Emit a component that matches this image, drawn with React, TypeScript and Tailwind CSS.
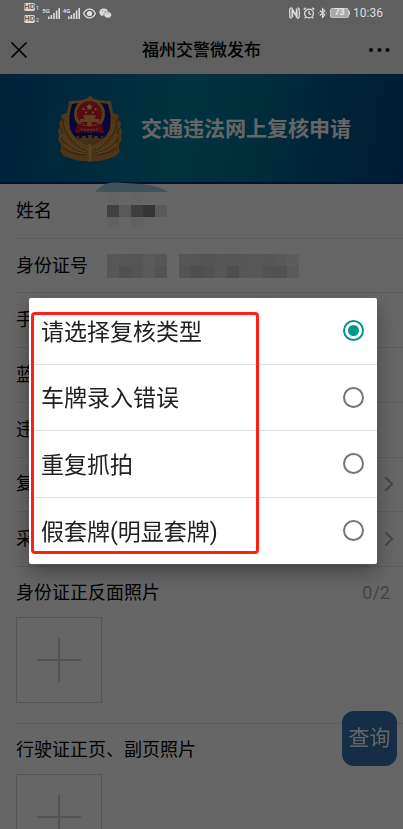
import { useState } from "react";
import { ChevronRight, X } from "lucide-react";

const options = ["请选择复核类型", "车牌录入错误", "重复抓拍", "假套牌(明显套牌)"];

// one colour per mosaic cell, empty string leaves a gap
const nameCells = [
  ["#fafafa", "", "#fafafa", "", ""],
  ["#a3a3a3", "#dedede", "#9c9c9c", "#858585", "#e0e0e0"],
  ["#f5f5f5", "", "#f4f4f4", "", ""],
];
const idCells = [
  ["#dadada", "#d7d7d7", "#d5d5d5", "#e0e0e0", "#d8d8d8", "", "#d8d8d8", "#d4d4d4", "#d3d3d3", "#d6d6d6", "#d4d4d4", "#d6d6d6", "#dadada", "#d7d7d7", "#dddddd", "#e8e8e8"],
  ["#dadada", "#c9c9c9", "#d2d2d2", "#dedede", "#cccccc", "", "#d0d0d0", "#c4c4c4", "#cacaca", "#d7d7d7", "#c4c4c4", "#d8d8d8", "#dadada", "#cccccc", "#cacaca", "#e0e0e0"],
];

const rows: { label: string; cells?: string[][]; more?: boolean }[] = [
  { label: "姓名", cells: nameCells },
  { label: "身份证号", cells: idCells },
  { label: "手" },
  { label: "蓝" },
  { label: "违" },
  { label: "复", more: true },
  { label: "采", more: true },
];

const photos = ["身份证正反面照片", "行驶证正页、副页照片"];

function Mosaic({ cells }: { cells: string[][] }) {
  return (
    <div aria-hidden="true">
      {cells.map((line, i) => (
        <div key={i} className="flex">
          {line.map((c, j) => <span key={j} className="size-3" style={{ backgroundColor: c || "transparent" }} />)}
        </div>
      ))}
    </div>
  );
}

function HdBadge({ sim }: { sim: string }) {
  return (
    <span className="flex items-end gap-px">
      <span className="rounded-xs bg-[#d8d8d8] text-[8px] leading-[8px] font-bold text-[#5f5f5f]">HD</span>
      <span className="text-[6px] leading-[6px]">{sim}</span>
    </span>
  );
}

function Signal({ label }: { label: string }) {
  return (
    <span className="flex items-end">
      <span className="-mr-0.5 self-start text-[6px] leading-[8px] font-bold">{label}</span>
      <svg width="12" height="12" viewBox="0 0 12 12" fill="currentColor" aria-hidden="true">
        <path d="M0 9.500h1.600V12H0zM2.600 8h1.600v4H2.600zM5.200 6h1.600v6H5.200zM7.800 3.500h1.600V12H7.800zM10.400 1H12v11h-1.600z" />
      </svg>
    </span>
  );
}

function StatusBar() {
  return (
    <div className="relative z-20 flex h-[26px] items-center justify-between bg-[#5f5f5f] pr-5 pl-6 text-[#dcdcdc]">
      <div className="flex items-center gap-[3px]">
        <span className="flex flex-col gap-1">
          <HdBadge sim="1" />
          <HdBadge sim="2" />
        </span>
        <Signal label="5G" />
        <Signal label="4G" />
        <svg width="13" height="11" viewBox="0 0 12 10" fill="none" stroke="currentColor" strokeWidth="1.200" aria-hidden="true">
          <path d="M.6 5C3-.4 9-.4 11.400 5 9 10.400 3 10.400.6 5z" />
          <circle cx="6" cy="5" r="1.800" fill="currentColor" />
        </svg>
        <svg width="13" height="11" viewBox="0 0 12 10" aria-hidden="true">
          <path d="M4.400.4C2 .4.3 1.900.3 3.800c0 1.100.6 2 1.500 2.600L1.500 7.700l1.500-.8h1.400c2.300 0 4.100-1.300 4.100-3.100S6.700.4 4.400.4z" fill="currentColor" />
          <path d="M8.200 3.300c-2 0-3.600 1.300-3.600 2.900s1.600 2.900 3.600 2.900l1-.1 1.300.7-.3-1.200c.9-.5 1.400-1.400 1.400-2.300 0-1.600-1.500-2.900-3.400-2.900z" fill="currentColor" stroke="#5f5f5f" strokeWidth=".5" />
          <path d="M3 2.700h.8M5.300 2.700h.8M7 5.400h.6M8.900 5.400h.6" stroke="#5f5f5f" strokeWidth=".8" />
        </svg>
      </div>
      <div className="flex items-center gap-[3px]">
        <svg width="11" height="12" viewBox="0 0 11 12" fill="none" stroke="currentColor" aria-hidden="true">
          <path d="M2.500.8C.7 1 .7 1.500.7 6s0 5 1.800 5.200M8.500.8c1.800.2 1.800.7 1.800 5.200s0 5-1.800 5.200" strokeWidth="1.300" />
          <path d="M3.300 10.500v-8l4.400 7v-8" strokeWidth="1.800" />
        </svg>
        <svg width="12" height="12" viewBox="0 0 11 11" fill="none" stroke="currentColor" strokeWidth="1.200" aria-hidden="true">
          <circle cx="5.500" cy="6" r="4" />
          <path d="M5.500 3.500V6l1.800 1M.6 2.400 2.700.7M10.400 2.400 8.300.7M2.500 9.300 1.500 10.500M8.500 9.300l1 1.200" />
        </svg>
        <svg width="9" height="12" viewBox="0 0 9 11" fill="none" stroke="currentColor" strokeWidth="1.100" aria-hidden="true">
          <path d="m1.800 3 5 4.600L4.500 10V1l2.300 2.400L1.800 8M.2 5.500h1M7.800 5.500h1" />
        </svg>
        <span className="flex items-center">
          <span className="flex h-[10px] w-[19px] items-center justify-center rounded-xs border border-[#c4c4c4] bg-[#a8a8a8] text-[9px] font-bold text-[#e8e8e8]">73</span>
          <span className="h-1 w-px bg-[#c4c4c4]" />
        </span>
        <time className="text-xs">10:36</time>
      </div>
    </div>
  );
}

function PoliceBadge() {
  return (
    <svg width="64" height="67" viewBox="0 0 64 67" aria-hidden="true">
      {/* pine branches */}
      <path d="M8 18 3 20l1 5-3 2 1 6-2 2 1 6-1 3 3 5 0 4-1 3 4 5 8 3 8 2 6 0 3 1 2 0 3-1 6 0 8-2 8-3 4-5-1-3 0-4 3-5-1-3 1-6-2-2 1-6-3-2 1-5-5-2z" fill="#c4863a" />
      <path d="M5 24c0 12 6 22 22 31M3 33c2 11 9 18 24 23M3 43c4 8 12 13 25 15M5 53c7 5 14 7 24 7M59 24c0 12-6 22-22 31M61 33c-2 11-9 18-24 23M61 43c-4 8-12 13-25 15M59 53c-7 5-14 7-24 7" fill="none" stroke="#8c5a28" strokeWidth="1.200" />
      <path d="M7 29c2 10 8 18 19 25M5 39c4 9 11 14 22 18M57 29c-2 10-8 18-19 25M59 39c-4 9-11 14-22 18M6 49c6 6 12 8 22 10M58 49c-6 6-12 8-22 10" fill="none" stroke="#e2a954" strokeWidth="1.200" />
      {/* shield */}
      <path d="M32 .8 36 4l7 1.500L53 6l2 12 .5 12C55 43 44 50 32 56 20 50 9 43 8.500 30L9 18 11 6l10-.5L28 4z" fill="#c98f42" />
      <path d="M32 4.500 37 7l13 2 2.500 11v10C52 40 43 46 32 51 21 46 12 40 11.500 30V20L14 9l13-2z" fill="#10108c" />
      {/* national emblem */}
      <circle cx="31.500" cy="19" r="15.500" fill="#d09a48" />
      <circle cx="31.500" cy="18.500" r="12.500" fill="#dc1e28" />
      <path d="m31.500 8.500 1 2.300 2.500.2-1.900 1.600.6 2.400-2.200-1.300-2.200 1.300.6-2.400L28 11l2.500-.2z" fill="#ffdc80" />
      <circle cx="25.500" cy="14" r="1.100" fill="#ffdc80" />
      <circle cx="37.500" cy="14" r="1.100" fill="#ffdc80" />
      <circle cx="28" cy="17.500" r="1" fill="#ffdc80" />
      <circle cx="35" cy="17.500" r="1" fill="#ffdc80" />
      <path d="M26 20h11l1 2.500h-1.500V24H41v3H22v-3h4.500v-1.500H25z" fill="#e6a84e" />
      <path d="M19 29h5l2 2h11l2-2h5l2 9-9-1-5.500 1-5.500-1-9 1z" fill="#cc1e28" />
      <path d="M23 34c3 1 14 1 17 0" fill="none" stroke="#d9963f" strokeWidth="1.500" strokeDasharray="2 1" />
      <circle cx="31.500" cy="29" r="2.500" fill="#e6a84e" />
      {/* great wall and stem */}
      <path d="M18 41h3v2h3v-2h4v2h2v-3h4v3h2v-2h4v2h3v-2h3l-4 5-10 5-10-5z" fill="#a8743a" />
      <path d="M30.500 49h3l-.5 17h-2z" fill="#e0a850" />
    </svg>
  );
}

export default function App() {
  const [picked, setPicked] = useState(options[0]);

  return (
    <div className="h-screen overflow-hidden bg-white font-[Roboto,'Noto_Sans_CJK_SC',sans-serif] text-black">
      <StatusBar />
      <header className="grid h-12 grid-cols-[1fr_auto_1fr] items-center bg-[#ededed] px-[5px]">
        <button type="button" aria-label="关闭" className="justify-self-start">
          <X size={28} strokeWidth={1.5} />
        </button>
        <h1 className="pt-0.5 text-[17px] font-medium">福州交警微发布</h1>
        <button type="button" aria-label="更多" className="justify-self-end pr-[7px]">
          <svg width="24" height="6" viewBox="0 0 24 6" fill="currentColor">
            <circle cx="4" cy="3" r="2" />
            <circle cx="12.500" cy="3" r="2" />
            <circle cx="20.500" cy="3" r="2" />
          </svg>
        </button>
      </header>

      <div className="flex h-[110px] items-center gap-[19px] border-b-2 border-[#003478] bg-[linear-gradient(100deg,#00568c_0%,#006c98_25%,#00829c_45%,#007494_62%,#005888_82%,#004882_100%)] pl-[58px]">
        <PoliceBadge />
        <h2 className="pt-1 text-[21px] font-bold text-white">交通违法网上复核申请</h2>
      </div>

      <main className="relative">
        <svg className="absolute -top-0.5 left-[95px]" width="73" height="10" viewBox="0 0 73 10" aria-hidden="true">
          <path d="M0 10C7 2 14 0 22 .5L45 2c14 1 22 4 28 8z" fill="#a3cce0" />
        </svg>
        <div className="ml-[15px] grid h-[383px] auto-rows-fr">
          {rows.map(r => (
            <div key={r.label} className="flex items-center border-b border-[#e6e6e6] pr-0.5 pl-px">
              <span className="w-[91px] text-lg">{r.label}</span>
              {r.cells && <Mosaic cells={r.cells} />}
              {r.more && <ChevronRight size={24} className="ml-auto text-[#aaa]" />}
            </div>
          ))}
        </div>
        {photos.map(p => (
          <section key={p} className="ml-[15px] border-b border-[#e6e6e6] pt-3 pb-5 pl-px">
            <div className="flex h-7 items-center justify-between pr-[13px] text-lg">
              <h3>{p}</h3>
              <span className="text-[#a8a8a8]">0/2</span>
            </div>
            <button type="button" aria-label={`添加${p}`} className="mt-[10px] flex size-[86px] items-center justify-center border border-[#d2d2d2] text-[#d2d2d2]">
              <svg width="44" height="44" viewBox="0 0 44 44" stroke="currentColor" strokeWidth="2">
                <path d="M22 0v44M0 22h44" />
              </svg>
            </button>
          </section>
        ))}
      </main>

      <button type="button" className="fixed right-1.5 bottom-[63px] size-[55px] rounded-xl bg-[#2a68a8]/95 text-[21px] text-white">查询</button>

      <div className="fixed inset-0 z-10 flex items-center bg-black/60 pt-[33px]">
        <div role="dialog" aria-label="复核类型" className="relative mr-[26px] ml-[29px] flex-1 rounded-xs bg-white shadow-[0_8px_20px_rgba(0,0,0,0.35)]">
          <fieldset className="grid h-[266px] auto-rows-fr divide-y divide-[#dfdfdf]">
            {options.map(o => (
              <label key={o} className="flex items-center justify-between pr-[13px] pl-3 text-[23px] text-[#212121]">
                <span className="pt-1">{o}</span>
                <input type="radio" name="review-type" checked={picked === o} onChange={() => setPicked(o)}
                  className="size-[21px] appearance-none rounded-full border-2 border-[#757575] bg-clip-content p-[3px] checked:border-[#009688] checked:bg-[#009688]" />
              </label>
            ))}
          </fieldset>
          <div className="pointer-events-none absolute top-[14px] left-0.5 h-[242px] w-[228px] rounded-sm border-3 border-[#ff2015]" />
        </div>
      </div>
    </div>
  );
}
